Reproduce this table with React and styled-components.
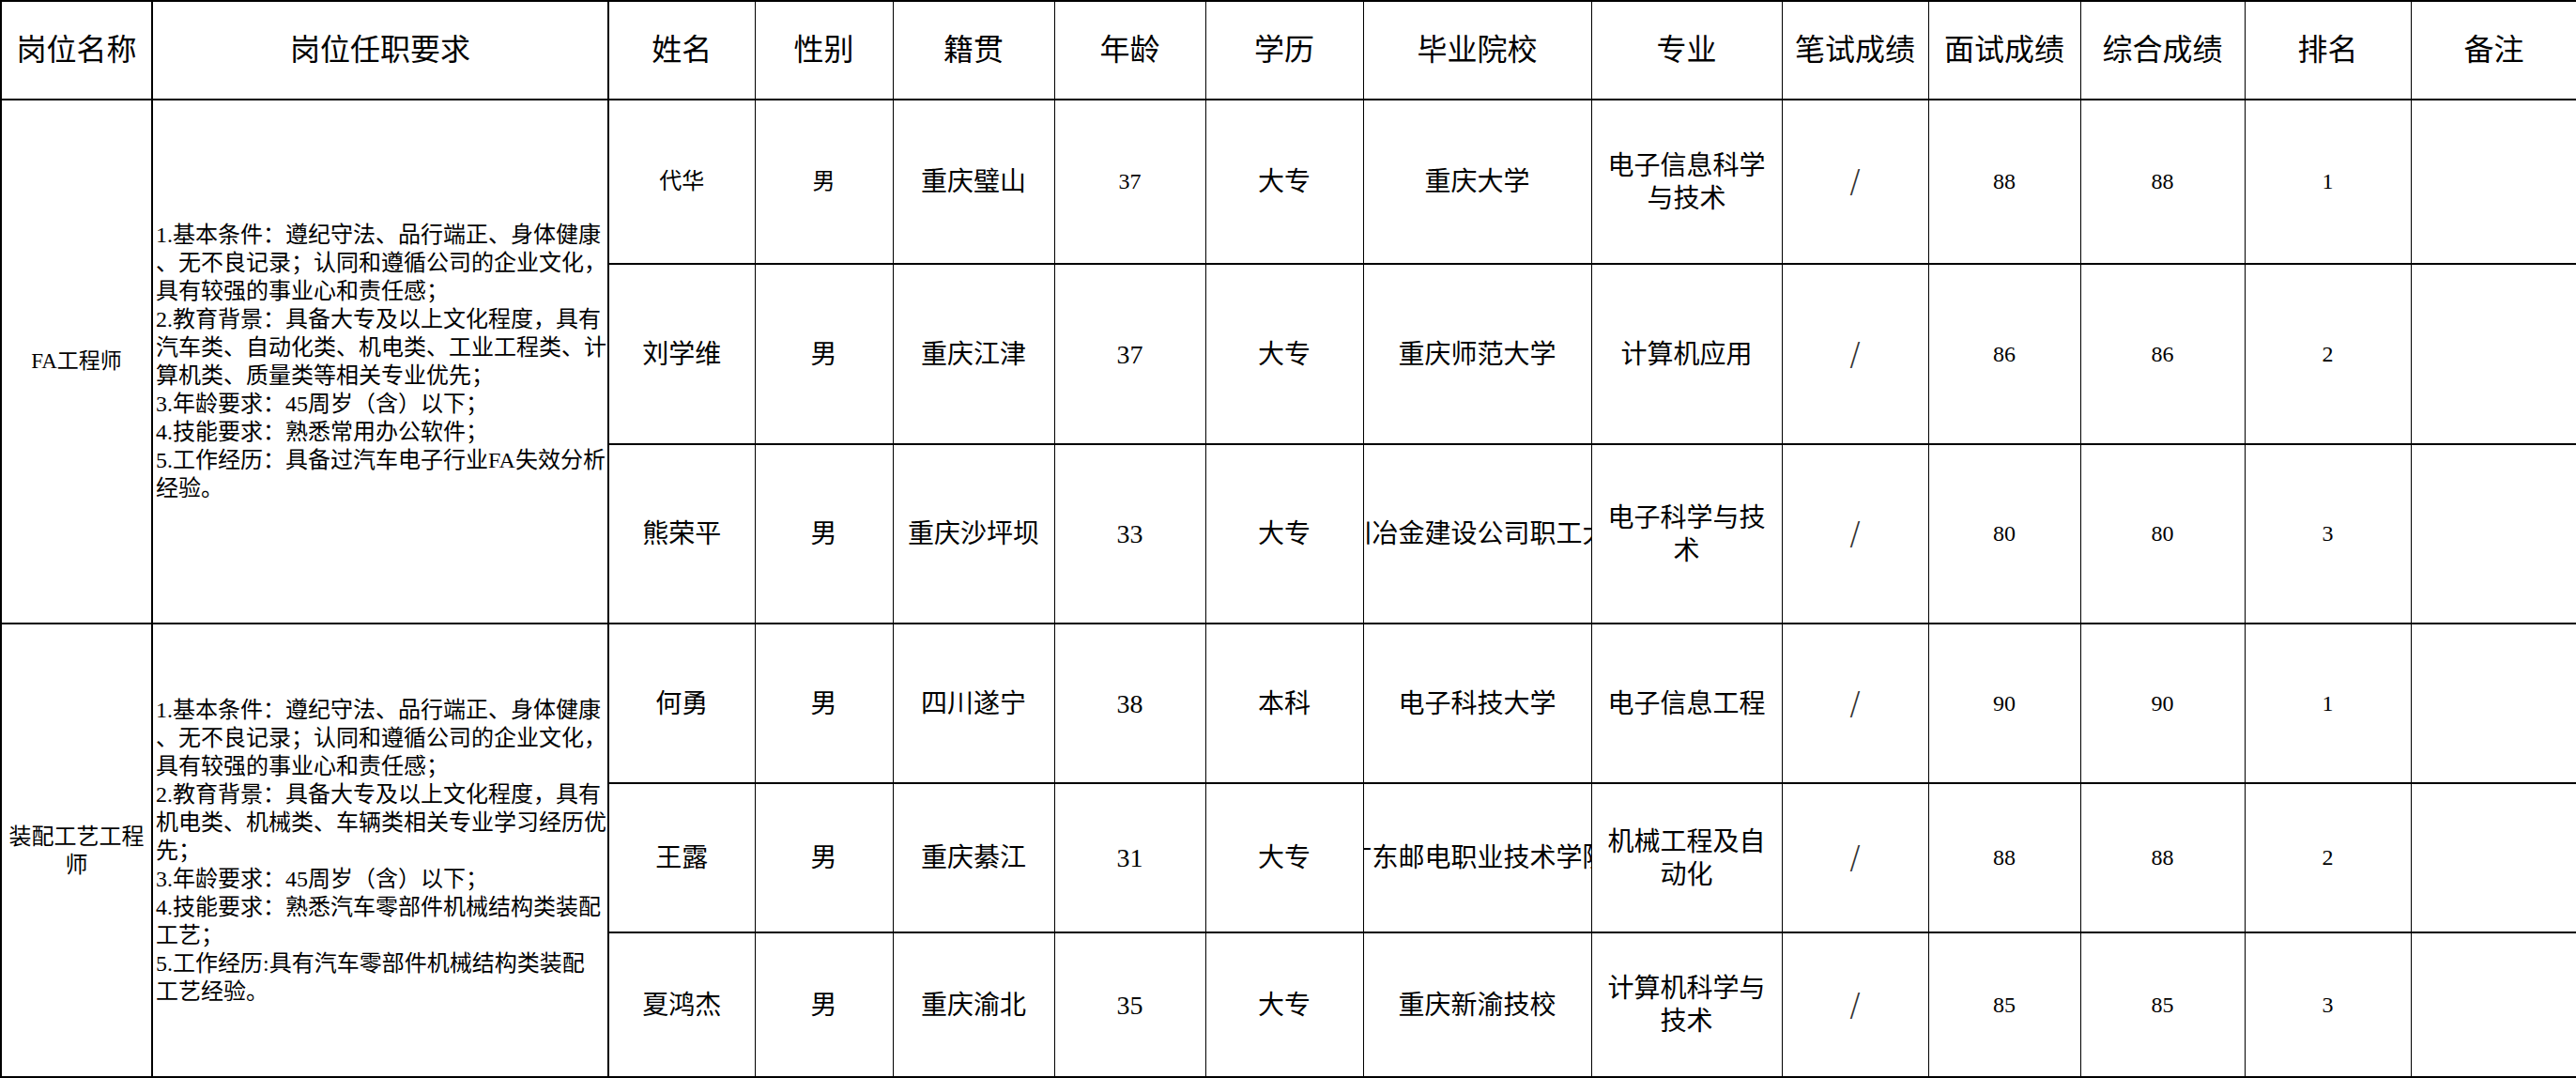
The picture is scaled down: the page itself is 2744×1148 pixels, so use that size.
import React from "react";
import styled, { createGlobalStyle } from "styled-components";

const columns = [161, 486, 156, 147, 172, 161, 168, 243, 203, 156, 162, 175, 177, 177];

const headers = [
  "岗位名称",
  "岗位任职要求",
  "姓名",
  "性别",
  "籍贯",
  "年龄",
  "学历",
  "毕业院校",
  "专业",
  "笔试成绩",
  "面试成绩",
  "综合成绩",
  "排名",
  "备注",
];

const groups = [
  {
    title: "FA工程师",
    titleSize: 23,
    requirements: [
      "1.基本条件：遵纪守法、品行端正、身体健康",
      "、无不良记录；认同和遵循公司的企业文化，",
      "具有较强的事业心和责任感；",
      "2.教育背景：具备大专及以上文化程度，具有",
      "汽车类、自动化类、机电类、工业工程类、计",
      "算机类、质量类等相关专业优先；",
      "3.年龄要求：45周岁（含）以下；",
      "4.技能要求：熟悉常用办公软件；",
      "5.工作经历：具备过汽车电子行业FA失效分析",
      "经验。",
    ],
    people: [
      {
        height: 175,
        compact: true,
        name: "代华",
        gender: "男",
        origin: "重庆璧山",
        age: "37",
        edu: "大专",
        school: "重庆大学",
        major: "电子信息科学与技术",
        written: "/",
        interview: "88",
        total: "88",
        rank: "1",
      },
      {
        height: 192,
        name: "刘学维",
        gender: "男",
        origin: "重庆江津",
        age: "37",
        edu: "大专",
        school: "重庆师范大学",
        major: "计算机应用",
        written: "/",
        interview: "86",
        total: "86",
        rank: "2",
      },
      {
        height: 191,
        name: "熊荣平",
        gender: "男",
        origin: "重庆沙坪坝",
        age: "33",
        edu: "大专",
        school: "四川冶金建设公司职工大学",
        major: "电子科学与技术",
        written: "/",
        interview: "80",
        total: "80",
        rank: "3",
      },
    ],
  },
  {
    title: "装配工艺工程师",
    titleSize: 24,
    requirements: [
      "1.基本条件：遵纪守法、品行端正、身体健康",
      "、无不良记录；认同和遵循公司的企业文化，",
      "具有较强的事业心和责任感；",
      "2.教育背景：具备大专及以上文化程度，具有",
      "机电类、机械类、车辆类相关专业学习经历优",
      "先；",
      "3.年龄要求：45周岁（含）以下；",
      "4.技能要求：熟悉汽车零部件机械结构类装配",
      "工艺；",
      "5.工作经历:具有汽车零部件机械结构类装配",
      "工艺经验。",
    ],
    people: [
      {
        height: 170,
        name: "何勇",
        gender: "男",
        origin: "四川遂宁",
        age: "38",
        edu: "本科",
        school: "电子科技大学",
        major: "电子信息工程",
        written: "/",
        interview: "90",
        total: "90",
        rank: "1",
      },
      {
        height: 159,
        name: "王露",
        gender: "男",
        origin: "重庆綦江",
        age: "31",
        edu: "大专",
        school: "广东邮电职业技术学院",
        major: "机械工程及自动化",
        written: "/",
        interview: "88",
        total: "88",
        rank: "2",
      },
      {
        height: 154,
        name: "夏鸿杰",
        gender: "男",
        origin: "重庆渝北",
        age: "35",
        edu: "大专",
        school: "重庆新渝技校",
        major: "计算机科学与技术",
        written: "/",
        interview: "85",
        total: "85",
        rank: "3",
      },
    ],
  },
];

const GlobalStyle = createGlobalStyle`
  html, body {
    margin: 0;
    padding: 0;
    background: #ffffff;
  }

  body {
    font-family: "Liberation Serif", "Noto Sans CJK SC", serif;
    color: #000000;
  }
`;

const Page = styled.div`
  width: 2744px;
  height: 1148px;
  overflow: hidden;
  background: #ffffff;
`;

const Sheet = styled.table`
  border-collapse: collapse;
  table-layout: fixed;
  width: 2744px;
  border-top: 2px solid #000;
  border-left: 2px solid #000;
`;

const HeadRow = styled.tr`
  height: 105px;
`;

const HeadCell = styled.th`
  font-weight: 400;
  font-size: 32px;
  line-height: 1.2;
  padding: 0;
  text-align: center;
  vertical-align: middle;
  white-space: nowrap;
  border-left: ${(p) => (p.$heavy ? 2 : 1)}px solid #000;
  border-right: ${(p) => (p.$heavy ? 2 : 1)}px solid #000;
  border-bottom: 2px solid #000;
`;

const Row = styled.tr`
  height: ${(p) => p.$h}px;
`;

const Cell = styled.td`
  font-size: ${(p) => (p.$small ? 24 : 28)}px;
  line-height: 35px;
  padding: 0 6px;
  text-align: center;
  vertical-align: middle;
  border-top: 2px solid #000;
  border-bottom: 2px solid #000;
  border-left: 1px solid #000;
  border-right: 1px solid #000;
`;

const SlashCell = styled(Cell)`
  font-family: "DejaVu Sans", sans-serif;
  font-size: 34px;
  font-weight: 200;
  color: #333;
`;

const TitleCell = styled.td`
  font-size: ${(p) => p.$size}px;
  line-height: 30px;
  padding: 0 2px;
  text-align: center;
  vertical-align: middle;
  border: 2px solid #000;
`;

const RequirementCell = styled.td`
  font-size: 24px;
  line-height: 30px;
  padding: 0 0 0 3px;
  text-align: left;
  vertical-align: middle;
  border: 2px solid #000;
`;

const RequirementLine = styled.div`
  white-space: nowrap;
`;

const SchoolCell = styled.td`
  font-size: 28px;
  line-height: 35px;
  padding: 0;
  vertical-align: middle;
  border-top: 2px solid #000;
  border-bottom: 2px solid #000;
  border-left: 1px solid #000;
  border-right: 1px solid #000;
`;

const Clip = styled.div`
  display: flex;
  justify-content: center;
  overflow: hidden;
  white-space: nowrap;
  width: 100%;
`;

const PersonRow = ({ person, group, first }) => (
  <Row $h={person.height}>
    {first && (
      <>
        <TitleCell rowSpan={group.people.length} $size={group.titleSize}>
          {group.title}
        </TitleCell>
        <RequirementCell rowSpan={group.people.length}>
          {group.requirements.map((line, i) => (
            <RequirementLine key={i}>{line}</RequirementLine>
          ))}
        </RequirementCell>
      </>
    )}
    <Cell $small={person.compact}>{person.name}</Cell>
    <Cell $small={person.compact}>{person.gender}</Cell>
    <Cell>{person.origin}</Cell>
    <Cell $small={person.compact}>{person.age}</Cell>
    <Cell>{person.edu}</Cell>
    <SchoolCell>
      <Clip>
        <span>{person.school}</span>
      </Clip>
    </SchoolCell>
    <Cell>{person.major}</Cell>
    <SlashCell>{person.written}</SlashCell>
    <Cell $small>{person.interview}</Cell>
    <Cell $small>{person.total}</Cell>
    <Cell $small>{person.rank}</Cell>
    <Cell $small></Cell>
  </Row>
);

export default function App() {
  return (
    <Page>
      <GlobalStyle />
      <Sheet>
        <colgroup>
          {columns.map((w, i) => (
            <col key={i} style={{ width: w }} />
          ))}
        </colgroup>
        <thead>
          <HeadRow>
            {headers.map((h, i) => (
              <HeadCell key={h} $heavy={i < 2}>
                {h}
              </HeadCell>
            ))}
          </HeadRow>
        </thead>
        <tbody>
          {groups.map((group) =>
            group.people.map((person, i) => (
              <PersonRow
                key={group.title + person.name}
                person={person}
                group={group}
                first={i === 0}
              />
            ))
          )}
        </tbody>
      </Sheet>
    </Page>
  );
}
